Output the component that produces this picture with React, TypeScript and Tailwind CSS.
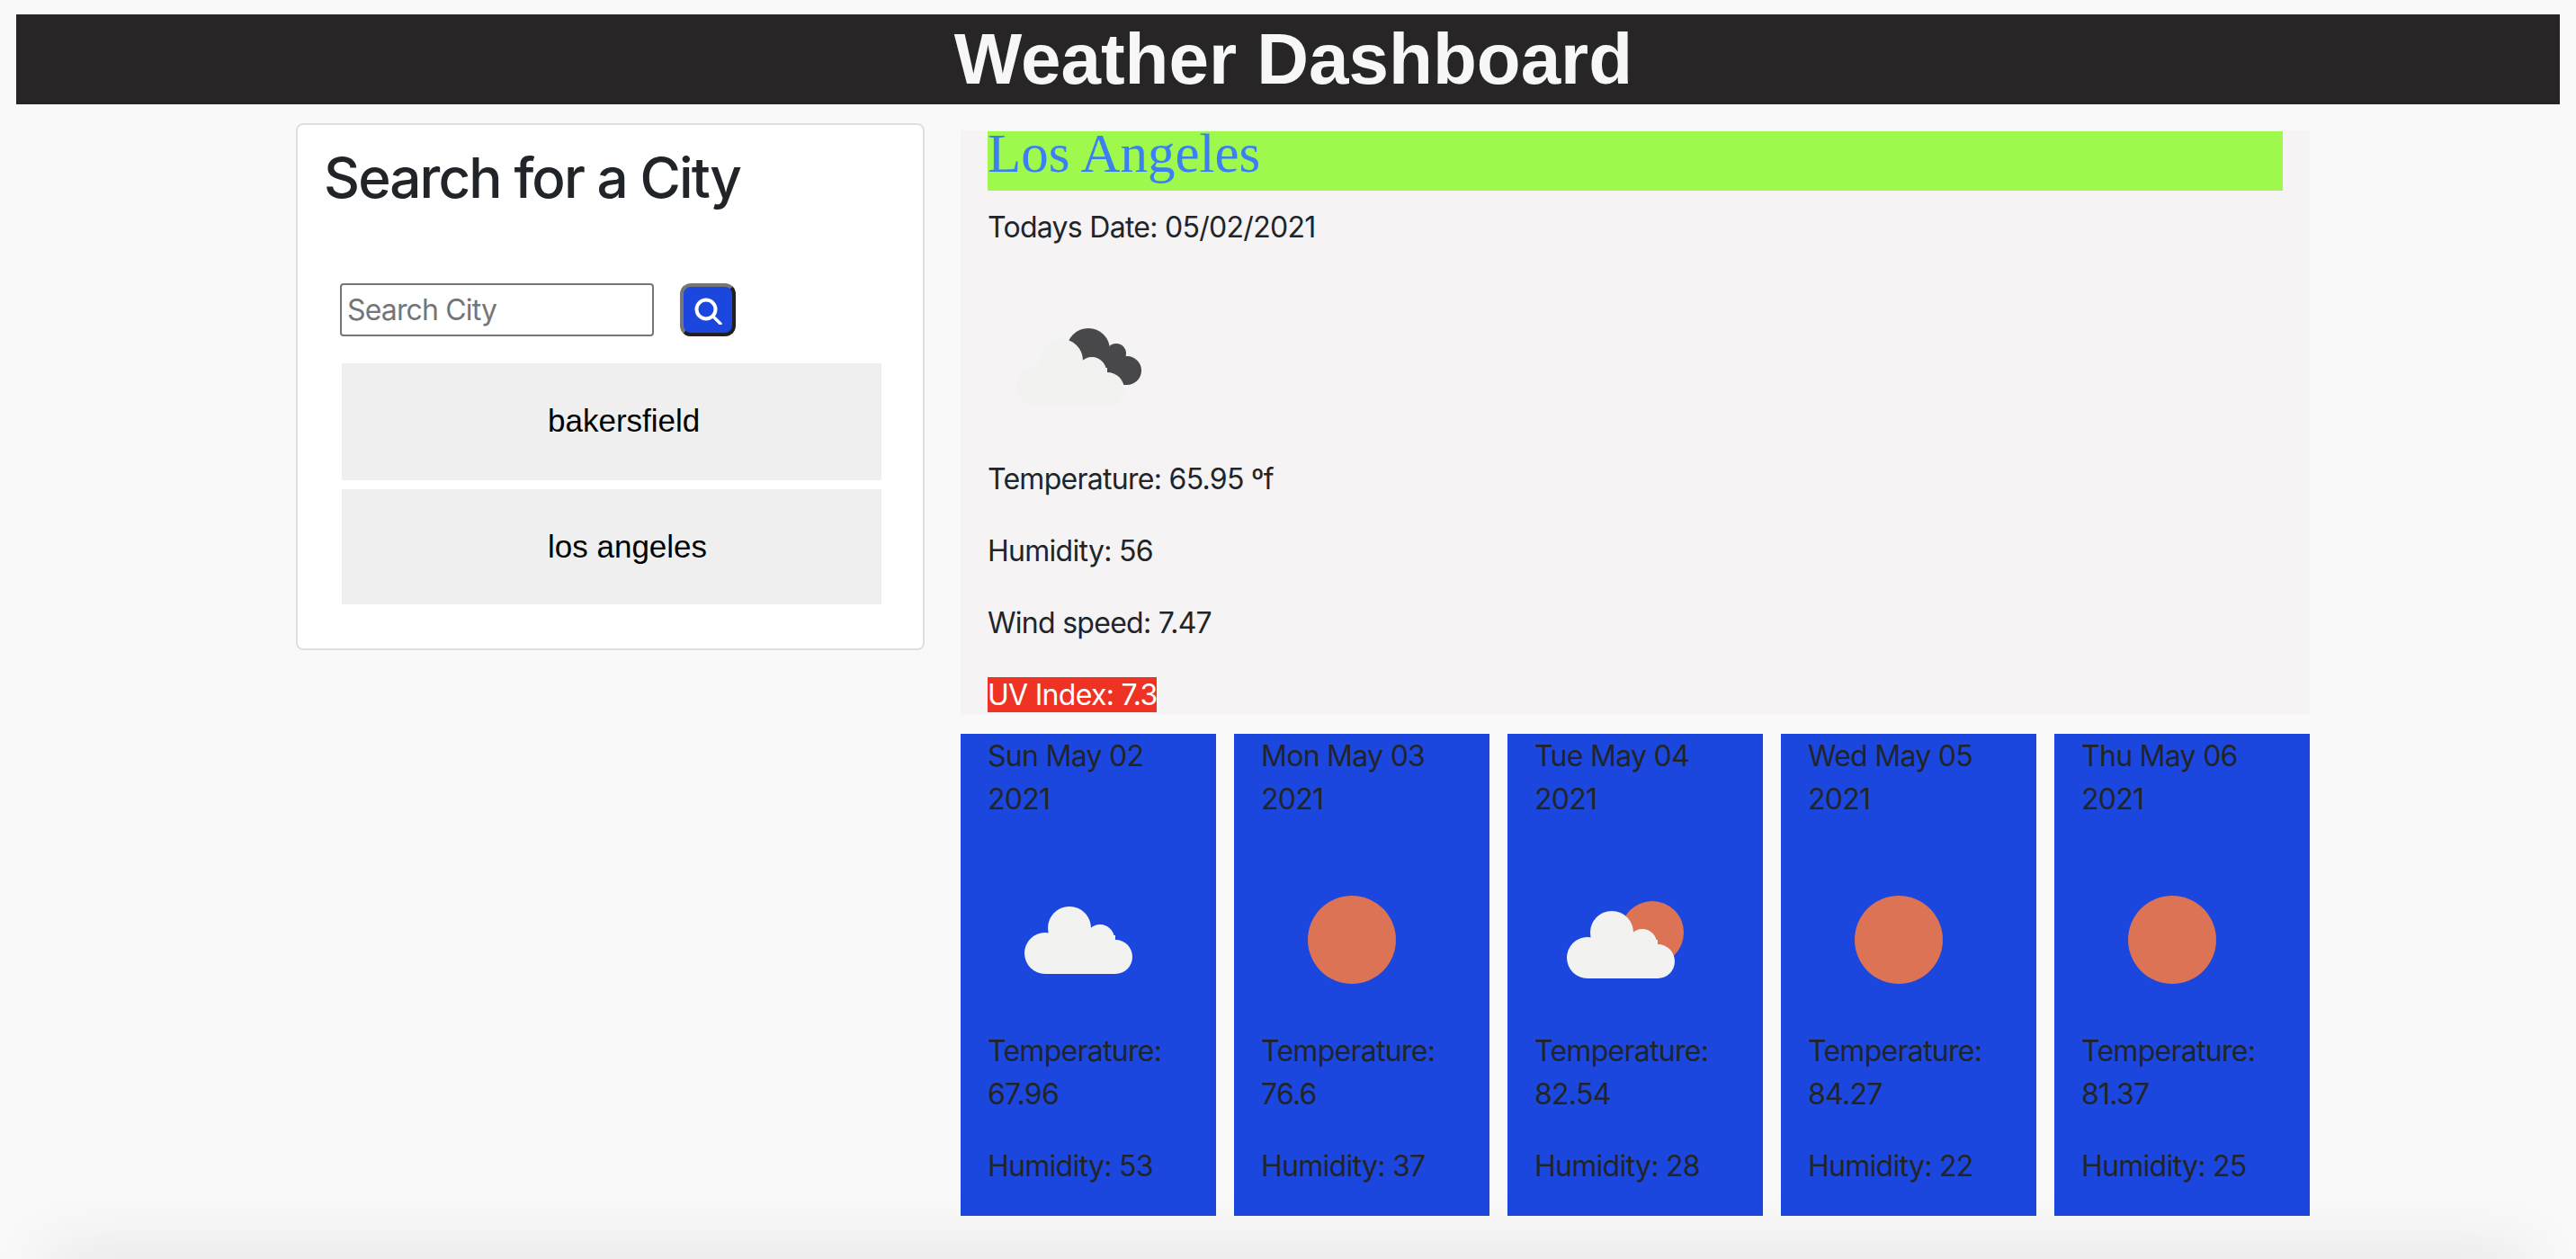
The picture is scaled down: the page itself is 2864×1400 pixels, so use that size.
const forecast = [
  { date: "Sun May 02 2021", icon: "cloud", temp: "67.96", humidity: "53" },
  { date: "Mon May 03 2021", icon: "sun", temp: "76.6", humidity: "37" },
  { date: "Tue May 04 2021", icon: "partly", temp: "82.54", humidity: "28" },
  { date: "Wed May 05 2021", icon: "sun", temp: "84.27", humidity: "22" },
  { date: "Thu May 06 2021", icon: "sun", temp: "81.37", humidity: "25" },
];

// white cloud shape, drawn in the 200x200 box of the weather icon
function CloudShape({ x = 0, y = 0 }: { x?: number; y?: number }) {
  return (
    <g fill="#f2f3f1" transform={`translate(${x} ${y})`}>
      <circle cx="59" cy="120" r="23" />
      <circle cx="86" cy="92" r="24" />
      <circle cx="120" cy="104" r="16" />
      <circle cx="137" cy="124" r="19" />
      <rect x="59" y="100" width="78" height="43" />
    </g>
  );
}

function WeatherIcon({ kind }: { kind: string }) {
  return (
    <svg viewBox="0 0 200 200" className="block h-[200px] w-[200px]">
      {kind === "sun" && <circle cx="101" cy="100" r="49" fill="#dd7355" />}
      {kind === "partly" && <circle cx="131" cy="92" r="35" fill="#dd7355" />}
      {kind === "partly" && <CloudShape />}
      {kind === "cloud" && <CloudShape x={5} y={-5} />}
      {kind === "broken" && (
        <g fill="#48484a">
          <circle cx="112" cy="80" r="24" />
          <circle cx="143" cy="84" r="11" />
          <circle cx="155" cy="103" r="16" />
          <polygon points="95,75 130,75 160,100 155,119 130,119 100,100" />
        </g>
      )}
      {kind === "broken" && <CloudShape x={-4} />}
    </svg>
  );
}

export default function App() {
  return (
    <div className="relative h-[1400px] overflow-hidden bg-[#f9f9f9] pt-[16px] font-['Inter',sans-serif] text-[32px] leading-[48px] tracking-[-0.72px] text-[#212529]">
      <header className="mx-[18px] flex h-[100px] items-center justify-center bg-[#272526] pl-[12px]">
        <h1 className="font-['Liberation_Sans',sans-serif] text-[80px] font-bold leading-none tracking-normal text-[#f7f7f7]">
          Weather Dashboard
        </h1>
      </header>

      <div className="ml-[329px] mt-[21px] flex w-[2239px] items-start gap-[40px]">
        {/* Search card */}
        <section className="h-[586px] w-[699px] rounded-[8px] border-2 border-[#dfdfdf] bg-white pl-[30px] pt-[20px]">
          <h2 className="-ml-[1px] text-[62px] font-medium leading-[77px] tracking-[-1.9px]">Search for a City</h2>
          <div className="ml-[17px] mt-[79px] flex items-center gap-[29px]">
            <input
              placeholder="Search City"
              className="h-[59px] w-[349px] rounded-[4px] border-2 border-[#767676] bg-white px-[6px] text-[32px] tracking-[-0.85px] placeholder:text-[#757575] outline-none"
            />
            <button className="flex h-[59px] w-[62px] items-center justify-center rounded-[12px] border-4 border-t-[#767676] border-l-[#767676] border-b-[#202020] border-r-[#202020] bg-[#1c47de]">
              <svg viewBox="0 0 32 32" className="h-[32px] w-[32px]" fill="none" stroke="white" strokeWidth="4" strokeLinecap="round">
                <circle cx="14" cy="15" r="10.5" />
                <path d="M22 23 L30 31" strokeWidth="3.4" />
              </svg>
            </button>
          </div>
          <ul className="ml-[19px] mt-[30px] flex w-[600px] flex-col gap-[10px] font-['Liberation_Sans',sans-serif] text-[35px] tracking-normal text-black">
            <li className="flex h-[130px] items-center bg-[#efefef] pb-[3px] pl-[229px]">bakersfield</li>
            <li className="flex h-[128px] items-center bg-[#efefef] pl-[229px]">los angeles</li>
          </ul>
        </section>

        {/* Current weather and forecast */}
        <main className="mt-[8px] w-[1500px]">
          <section className="h-[650px] bg-[#f5f3f4] pl-[30px] pr-[30px] pt-[1px]">
            <h2 className="h-[66px] bg-[#9ef94c] font-['Liberation_Serif',serif] text-[61px] leading-[50px] tracking-normal text-[#3b7ff2]">
              Los Angeles
            </h2>
            <p className="mb-[32px] mt-[17px]">Todays Date: 05/02/2021</p>
            <WeatherIcon kind="broken" />
            <p className="mb-[32px]">Temperature: 65.95 ºf</p>
            <p className="mb-[32px]">Humidity: 56</p>
            <p className="mb-[32px]">Wind speed: 7.47</p>
            <p>
              <span className="bg-[#ee3224] text-white">UV Index: 7.3</span>
            </p>
          </section>

          <div className="mt-[21px] flex gap-[20px]">
            {forecast.map((day) => (
              <article key={day.date} className="h-[536px] w-[284px] bg-[#1c47de] pl-[30px] pr-[20px] pt-[1px]">
                <p className="mb-[32px]">{day.date}</p>
                <WeatherIcon kind={day.icon} />
                <p className="mb-[32px]">Temperature: {day.temp}</p>
                <p>Humidity: {day.humidity}</p>
              </article>
            ))}
          </div>
        </main>
      </div>

      {/* soft window shadow along the bottom edge */}
      <div className="absolute left-[50px] right-[50px] top-[1400px] h-[20px] shadow-[0_0_70px_rgba(0,0,0,0.2)]" />
    </div>
  );
}
